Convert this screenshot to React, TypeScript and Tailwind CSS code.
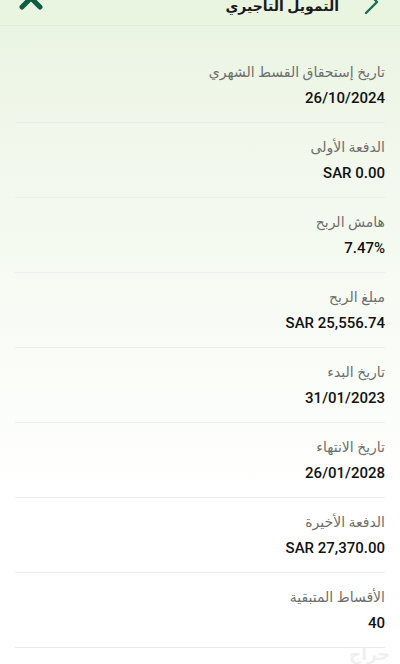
import React from "react";

const rows = [
  { label: "تاريخ إستحقاق القسط الشهري", value: "26/10/2024" },
  { label: "الدفعة الأولى", value: "SAR 0.00" },
  { label: "هامش الربح", value: "7.47%" },
  { label: "مبلغ الربح", value: "SAR 25,556.74" },
  { label: "تاريخ البدء", value: "31/01/2023" },
  { label: "تاريخ الانتهاء", value: "26/01/2028" },
  { label: "الدفعة الأخيرة", value: "SAR 27,370.00" },
  { label: "الأقساط المتبقية", value: "40" },
];

export default function App() {
  return (
    <div
      dir="rtl"
      className="relative w-[400px] h-[664px] overflow-hidden bg-[linear-gradient(180deg,#e9f4e0_0%,#f0f7ea_18%,#f7fbf4_45%,#ffffff_75%)]"
      style={{ fontFamily: 'Roboto, "DejaVu Sans", sans-serif' }}
    >
      {/* header */}
      <div className="relative h-[26px] border-b border-[#e2eadc] flex items-start">
        <svg
          className="absolute right-[20px] top-[-12px]"
          width="18"
          height="28"
          viewBox="0 0 18 28"
          fill="none"
        >
          <path d="M4 2 L15 14 L4 25" stroke="#17704f" strokeWidth="2.4" strokeLinecap="round" strokeLinejoin="round" />
        </svg>
        <div className="mr-[61px] mt-[-5px] text-[14px] leading-[22px] font-bold text-[#1a1a1a]">
          التمويل التأجيري
        </div>
        <svg
          className="absolute left-[19px] top-[-8px]"
          width="24"
          height="18"
          viewBox="0 0 24 18"
          fill="none"
        >
          <path d="M3 15 L12 6 L21 15" stroke="#0d5c43" strokeWidth="5" strokeLinecap="round" strokeLinejoin="miter" />
        </svg>
      </div>
      <div className="h-[22px] ml-[30px] border-b border-[#edf3e9]" />

      <div className="px-[15px]">
        {rows.map((r, i) => (
          <div key={i} className="pt-[12px] pb-[12px] border-b border-[#ececec] flex flex-col items-start">
            <div className="h-[24px] leading-[24px] text-[14px] text-[#6e6e6e]">{r.label}</div>
            <div
              dir="ltr"
              className="mt-[2px] h-[24px] leading-[24px] text-[15px] font-medium text-[#111111] self-start"
            >
              {r.value}
            </div>
          </div>
        ))}
      </div>

      <div className="absolute right-[10px] bottom-[1px] text-[17px] font-bold text-[#f0f0f0] leading-none">
        حراج
      </div>
    </div>
  );
}
